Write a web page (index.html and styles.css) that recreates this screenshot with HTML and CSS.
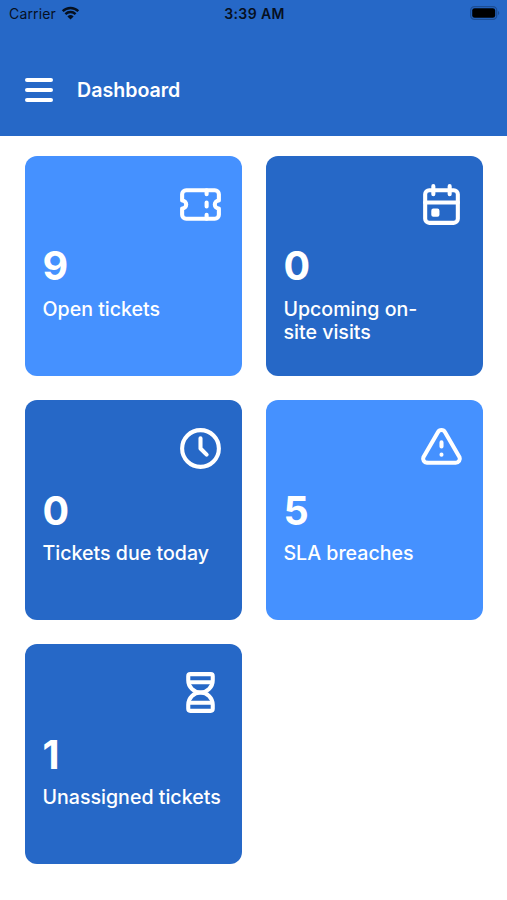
FILE: index.html
```
<!DOCTYPE html>
<html lang="en">
<head>
    <meta charset="UTF-8">
    <meta name="viewport" content="width=device-width, initial-scale=1.0">
    <title>Dashboard</title>
    <link rel="stylesheet" href="styles.css">
</head>
<body>

<header class="header">
    <div class="status-bar">
        <div class="carrier">
            <span>Carrier</span>
            <svg class="wifi" viewBox="0 0 18 14">
                <path d="M1.2 5.2a11.2 11.2 0 0 1 15.6 0M3.9 8.1a7.3 7.3 0 0 1 10.2 0" />
                <path class="wifi-dot" d="M9 13.6l-3.1-3.2a4.5 4.5 0 0 1 6.2 0z" />
            </svg>
        </div>
        <div class="time">3:39 AM</div>
        <div class="battery">
            <svg viewBox="0 0 30 14">
                <rect class="battery-case" x="0.7" y="0.7" width="26" height="12.6" rx="3.8" />
                <rect x="2.2" y="2.2" width="23" height="9.6" rx="2.4" />
                <path class="battery-tip" d="M28 5v4a2.2 2.2 0 0 0 0-4z" />
            </svg>
        </div>
    </div>
    <div class="nav-bar">
        <button type="button" class="menu-button" aria-label="Menu">
            <span class="bar"></span>
            <span class="bar"></span>
            <span class="bar"></span>
        </button>
        <h1 class="title">Dashboard</h1>
    </div>
</header>

<main class="cards">
    <div class="card light">
        <svg class="icon" viewBox="0 0 24 24">
            <path d="M15 5v2M15 11v2M15 17v2" />
            <path d="M5 5h14a2 2 0 0 1 2 2v3a2 2 0 0 0 0 4v3a2 2 0 0 1 -2 2h-14a2 2 0 0 1 -2 -2v-3a2 2 0 0 0 0 -4v-3a2 2 0 0 1 2 -2" />
        </svg>
        <div class="count">9</div>
        <div class="label">Open tickets</div>
    </div>

    <div class="card">
        <svg class="icon" viewBox="0 0 24 24">
            <rect x="4" y="5" width="16" height="16" rx="2" />
            <path d="M16 3v4M8 3v4M4 11h16M8 15h2v2h-2z" />
        </svg>
        <div class="count">0</div>
        <div class="label">Upcoming on-<br>site visits</div>
    </div>

    <div class="card">
        <svg class="icon" viewBox="0 0 24 24">
            <circle cx="12" cy="12" r="9" />
            <path d="M12 7v5l3 3" />
        </svg>
        <div class="count">0</div>
        <div class="label">Tickets due today</div>
    </div>

    <div class="card light">
        <svg class="icon" viewBox="0 0 24 24">
            <path d="M12 9v2M12 15v.01" />
            <path d="M5 19h14a2 2 0 0 0 1.84 -2.75l-7.1 -12.25a2 2 0 0 0 -3.5 0l-7.1 12.25a2 2 0 0 0 1.75 2.75" />
        </svg>
        <div class="count">5</div>
        <div class="label">SLA breaches</div>
    </div>

    <div class="card">
        <svg class="icon" viewBox="0 0 24 24">
            <path d="M6.5 7h11M6.5 17h11" />
            <path d="M6 20v-2a6 6 0 1 1 12 0v2a1 1 0 0 1 -1 1h-10a1 1 0 0 1 -1 -1z" />
            <path d="M6 4v2a6 6 0 1 0 12 0v-2a1 1 0 0 0 -1 -1h-10a1 1 0 0 0 -1 1z" />
        </svg>
        <div class="count">1</div>
        <div class="label">Unassigned tickets</div>
    </div>
</main>

</body>
</html>
```
FILE: styles.css
```
* {
    box-sizing: border-box;
}

body {
    margin: 0;
    font-family: Inter, "Liberation Sans", sans-serif;
    background-color: #fff;
    color: #fff;
}

.header {
    height: 136.3px;
    background-color: #2668c7;
}

.status-bar {
    display: grid;
    grid-template-columns: 1fr auto 1fr;
    align-items: center;
    height: 27px;
    padding: 0 7px 0 9px;
    color: #06101f;
    font-size: 14px;
}

.carrier {
    display: flex;
    align-items: center;
    gap: 5px;
    letter-spacing: 0.15px;
}

.wifi {
    width: 19px;
    height: 14px;
    margin-top: -1px;
    fill: none;
    stroke: #06101f;
    stroke-width: 2.4;
}

.wifi .wifi-dot {
    fill: #06101f;
    stroke: none;
}

.time {
    font-weight: 600;
    letter-spacing: 0.4px;
}

.battery {
    display: flex;
    justify-content: flex-end;
}

.battery svg {
    width: 30px;
    height: 14px;
    margin-top: -1px;
    fill: #000;
}

.battery .battery-case {
    fill: none;
    stroke: #1c4d94;
    stroke-width: 1.3;
}

.battery .battery-tip {
    fill: #1c4d94;
}

.nav-bar {
    display: flex;
    align-items: center;
    gap: 24px;
    height: 109px;
    padding: 17px 25px 0;
}

.menu-button {
    display: flex;
    flex-direction: column;
    gap: 6px;
    width: 28px;
    padding: 0;
    border: none;
    background: none;
    cursor: pointer;
}

.bar {
    width: 28px;
    height: 4px;
    border-radius: 2px;
    background-color: #fff;
}

.title {
    margin: 0;
    font-size: 19.6px;
    font-weight: 600;
    line-height: 24px;
}

.cards {
    display: grid;
    grid-template-columns: 1fr 1fr;
    grid-auto-rows: 219.8px;
    gap: 24.4px;
    padding: 19.5px 24.5px 0 25px;
}

.card {
    display: flex;
    flex-direction: column;
    padding: 24px 17px 0 17.5px;
    border-radius: 12px;
    background-color: #2668c7;
}

.card.light {
    background-color: #4591ff;
}

.icon {
    align-self: flex-end;
    width: 49px;
    height: 49px;
    fill: none;
    stroke: #fff;
    stroke-width: 2;
    stroke-linecap: round;
    stroke-linejoin: round;
}

.count {
    margin-top: 13.7px;
    font-size: 39.5px;
    font-weight: 700;
    line-height: 48px;
}

.label {
    margin-top: 7.5px;
    font-size: 19.6px;
    font-weight: 500;
    line-height: 23.5px;
    white-space: nowrap;
}
```
